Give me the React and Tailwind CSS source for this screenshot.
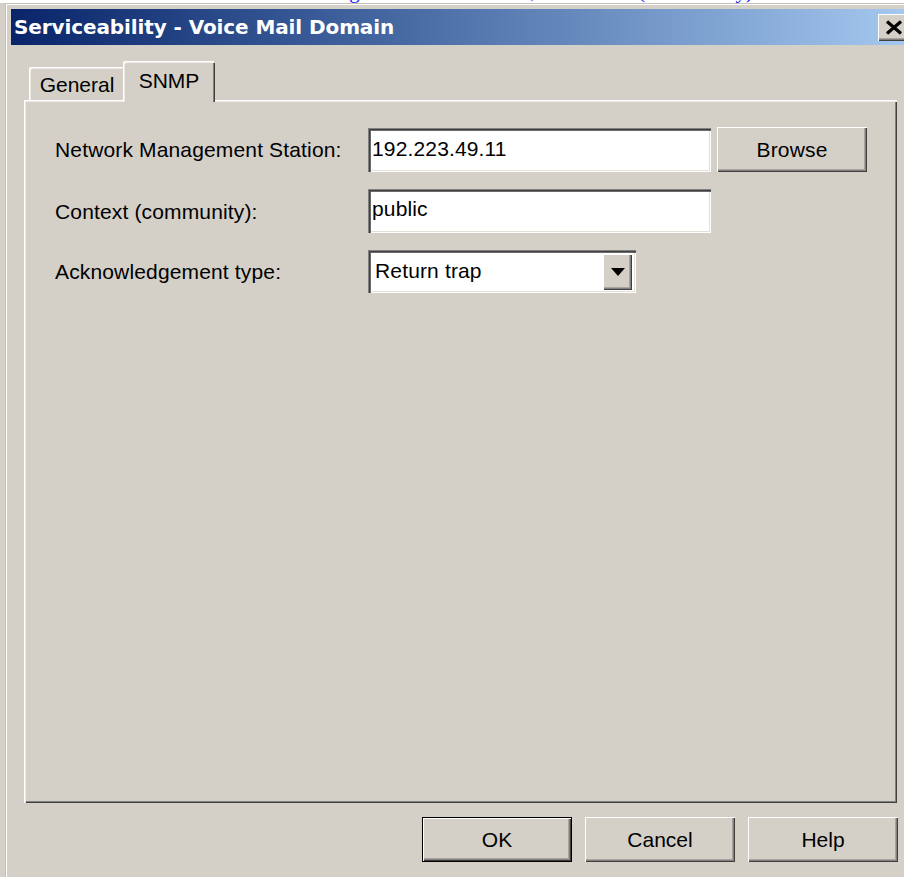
export default function App() {
  // classic 3D bevels
  const raised =
    "shadow-[inset_1px_1px_#ffffff,inset_-1px_-1px_#404040,inset_-2px_-2px_#808080,inset_-3px_-3px_#a8a49c]";
  const sunken =
    "shadow-[inset_1px_1px_#808080,inset_2px_2px_#404040,inset_3px_3px_#6a6a6a,inset_-1px_-1px_#ffffff,inset_-2px_-2px_#e4e0d8]";

  return (
    <div className="w-[904px] h-[877px] overflow-hidden bg-[#d4d0c8] font-['Liberation_Sans',Arial,sans-serif] text-black">
      {/* page caption above the dialog, mostly scrolled out of view */}
      <div className="h-[3px] overflow-hidden bg-white">
        <p className="mt-[-19px] pl-[298px] whitespace-nowrap font-['Liberation_Serif',serif] text-[21px] leading-[21px] text-[#2020ff]">
          Editing Voice Mail Domain, SNMP Tab (Cisco Unity)
        </p>
      </div>

      {/* dialog window */}
      <div className="ml-[5px] w-[910px] h-[880px] pl-[6px] pt-[6px] shadow-[inset_1px_1px_#c4c0b8,inset_2px_2px_#ffffff]">
        {/* title bar */}
        <div className="flex h-[36px] items-center bg-gradient-to-r from-[#0a246a] to-[#a6caf0] pl-[3px] pr-[6px]">
          <span className="flex-1 whitespace-nowrap font-['DejaVu_Sans',sans-serif] text-[20px] font-bold tracking-[-0.1px] text-white">
            Serviceability - Voice Mail Domain
          </span>
          <div className={`flex h-[27px] w-[31px] items-center justify-center bg-[#d4d0c8] ${raised}`}>
            <svg width="20" height="15" viewBox="0 0 20 15">
              <path d="M3 1.5 L17 13.5 M17 1.5 L3 13.5" stroke="#000" strokeWidth="3.2" fill="none" />
            </svg>
          </div>
        </div>

        {/* client area */}
        <div className="w-[887px] pl-[13px] pt-[16px]">
          {/* tab strip */}
          <div className="flex items-end pl-[5px] text-[21px] leading-none">
            <div className="flex h-[33px] w-[96px] items-center justify-center bg-[#d4d0c8] pt-[2px] shadow-[inset_1px_1px_#ffffff,inset_2px_2px_#eceae4] rounded-tl-[2px]">
              General
            </div>
            <div className="relative z-10 -mb-[2px] -ml-[2px] flex h-[41px] w-[92px] items-center justify-center bg-[#d4d0c8] pb-[3px] rounded-tl-[2px] rounded-tr-[2px] shadow-[inset_1px_1px_#ffffff,inset_2px_2px_#eceae4,inset_-1px_0_#404040,inset_-2px_0_#808080]">
              SNMP
            </div>
          </div>

          {/* tab page */}
          <div className="h-[703px] w-[873px] bg-[#d4d0c8] pl-[31px] pt-[27px] shadow-[inset_1px_1px_#ffffff,inset_2px_2px_#eceae4,inset_-1px_-1px_#404040,inset_-2px_-2px_#808080]">
            <div className="flex flex-col gap-[17px] text-[21px] leading-none tracking-[0.15px]">
              <div className="flex items-center">
                <span className="w-[313px]">Network Management Station:</span>
                <div className={`flex h-[44px] w-[343px] items-center bg-white pl-[4px] pb-[3px] ${sunken}`}>
                  192.223.49.11
                </div>
                <button className={`ml-[6px] flex h-[45px] w-[150px] items-center justify-center bg-[#d4d0c8] ${raised}`}>
                  Browse
                </button>
              </div>
              <div className="flex items-center">
                <span className="w-[313px]">Context (community):</span>
                <div className={`flex h-[44px] w-[343px] items-center bg-white pl-[4px] pb-[6px] ${sunken}`}>
                  public
                </div>
              </div>
              <div className="flex items-center">
                <span className="w-[313px]">Acknowledgement type:</span>
                <div className={`flex h-[43px] w-[268px] items-center bg-white py-[3px] pl-[7px] pr-[4px] ${sunken}`}>
                  <span className="flex-1 pb-[2px]">Return trap</span>
                  <div className={`flex h-[36px] w-[29px] items-center justify-center bg-[#d4d0c8] ${raised}`}>
                    <svg width="14" height="8" viewBox="0 0 14 8">
                      <path d="M0 0 H14 L7 8 Z" fill="#000" />
                    </svg>
                  </div>
                </div>
              </div>
            </div>
          </div>

          {/* dialog buttons */}
          <div className="mt-[14px] flex w-[874px] justify-end gap-[13px] text-[21px] leading-none">
            <button className="h-[45px] w-[150px] border border-black bg-[#d4d0c8] p-0">
              <div className={`flex h-full w-full items-center justify-center ${raised}`}>OK</div>
            </button>
            <button className={`flex h-[45px] w-[150px] items-center justify-center bg-[#d4d0c8] ${raised}`}>
              Cancel
            </button>
            <button className={`flex h-[45px] w-[150px] items-center justify-center bg-[#d4d0c8] ${raised}`}>
              Help
            </button>
          </div>
        </div>
      </div>
    </div>
  );
}
